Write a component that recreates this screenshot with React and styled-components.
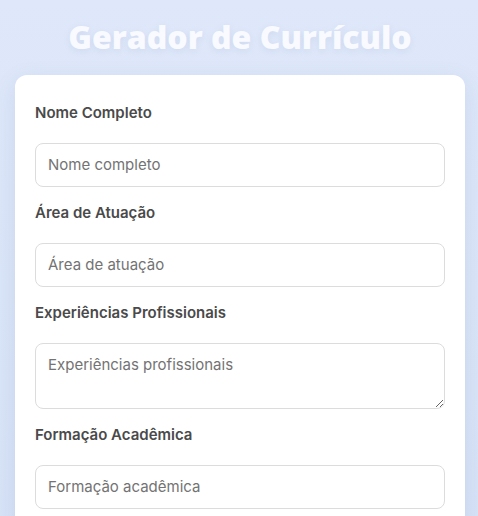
import styled, { createGlobalStyle } from "styled-components"

const GlobalStyle = createGlobalStyle`
  * {
    box-sizing: border-box;
  }

  body {
    margin: 0;
    font-family: Inter, "Liberation Sans", sans-serif;
    background: linear-gradient(180deg, #dfe8fa 0%, #d6e2f6 100%);
    min-height: 100vh;
  }
`

const Page = styled.div`
  padding: 17px 0 40px 15px;
`

const Title = styled.h1`
  width: 450px;
  margin: 0 0 18px;
  font-family: "Open Sans", Inter, sans-serif;
  font-weight: 800;
  font-size: 32px;
  line-height: 40px;
  text-align: center;
  color: #f8faff;
  text-shadow: 0 2px 6px rgba(120, 140, 180, 0.15);
`

const Card = styled.form`
  width: 450px;
  background: #ffffff;
  border-radius: 12px;
  padding: 29px 20px 12px;
  box-shadow: 0 6px 22px rgba(70, 100, 160, 0.12);
`

const Field = styled.div`
  margin-bottom: 17.5px;
`

const Label = styled.label`
  display: block;
  font-size: 15px;
  line-height: 18px;
  font-weight: 600;
  color: #4a4a4a;
  margin-bottom: 20.5px;
`

const baseInput = `
  display: block;
  width: 100%;
  font-family: Inter, "Liberation Sans", sans-serif;
  font-size: 15px;
  line-height: 18px;
  padding: 12px;
  color: #333;
  background: #fff;
  border: 1px solid #dcdcdc;
  border-radius: 8px;
  outline: none;

  &::placeholder {
    color: #737373;
  }
`

const Input = styled.input`
  ${baseInput}
  height: 44px;
`

const TextArea = styled.textarea`
  ${baseInput}
  height: 66px;
  resize: vertical;
`

const fields = [
  { label: "Nome Completo", placeholder: "Nome completo" },
  { label: "Área de Atuação", placeholder: "Área de atuação" },
  { label: "Experiências Profissionais", placeholder: "Experiências profissionais", multi: true },
  { label: "Formação Acadêmica", placeholder: "Formação acadêmica" },
]

export default function App() {
  return (
    <>
      <GlobalStyle />
      <Page>
        <Title>Gerador de Currículo</Title>
        <Card onSubmit={(e) => e.preventDefault()}>
          {fields.map((f) => (
            <Field key={f.label}>
              <Label>{f.label}</Label>
              {f.multi ? (
                <TextArea placeholder={f.placeholder} />
              ) : (
                <Input type="text" placeholder={f.placeholder} />
              )}
            </Field>
          ))}
        </Card>
      </Page>
    </>
  )
}
